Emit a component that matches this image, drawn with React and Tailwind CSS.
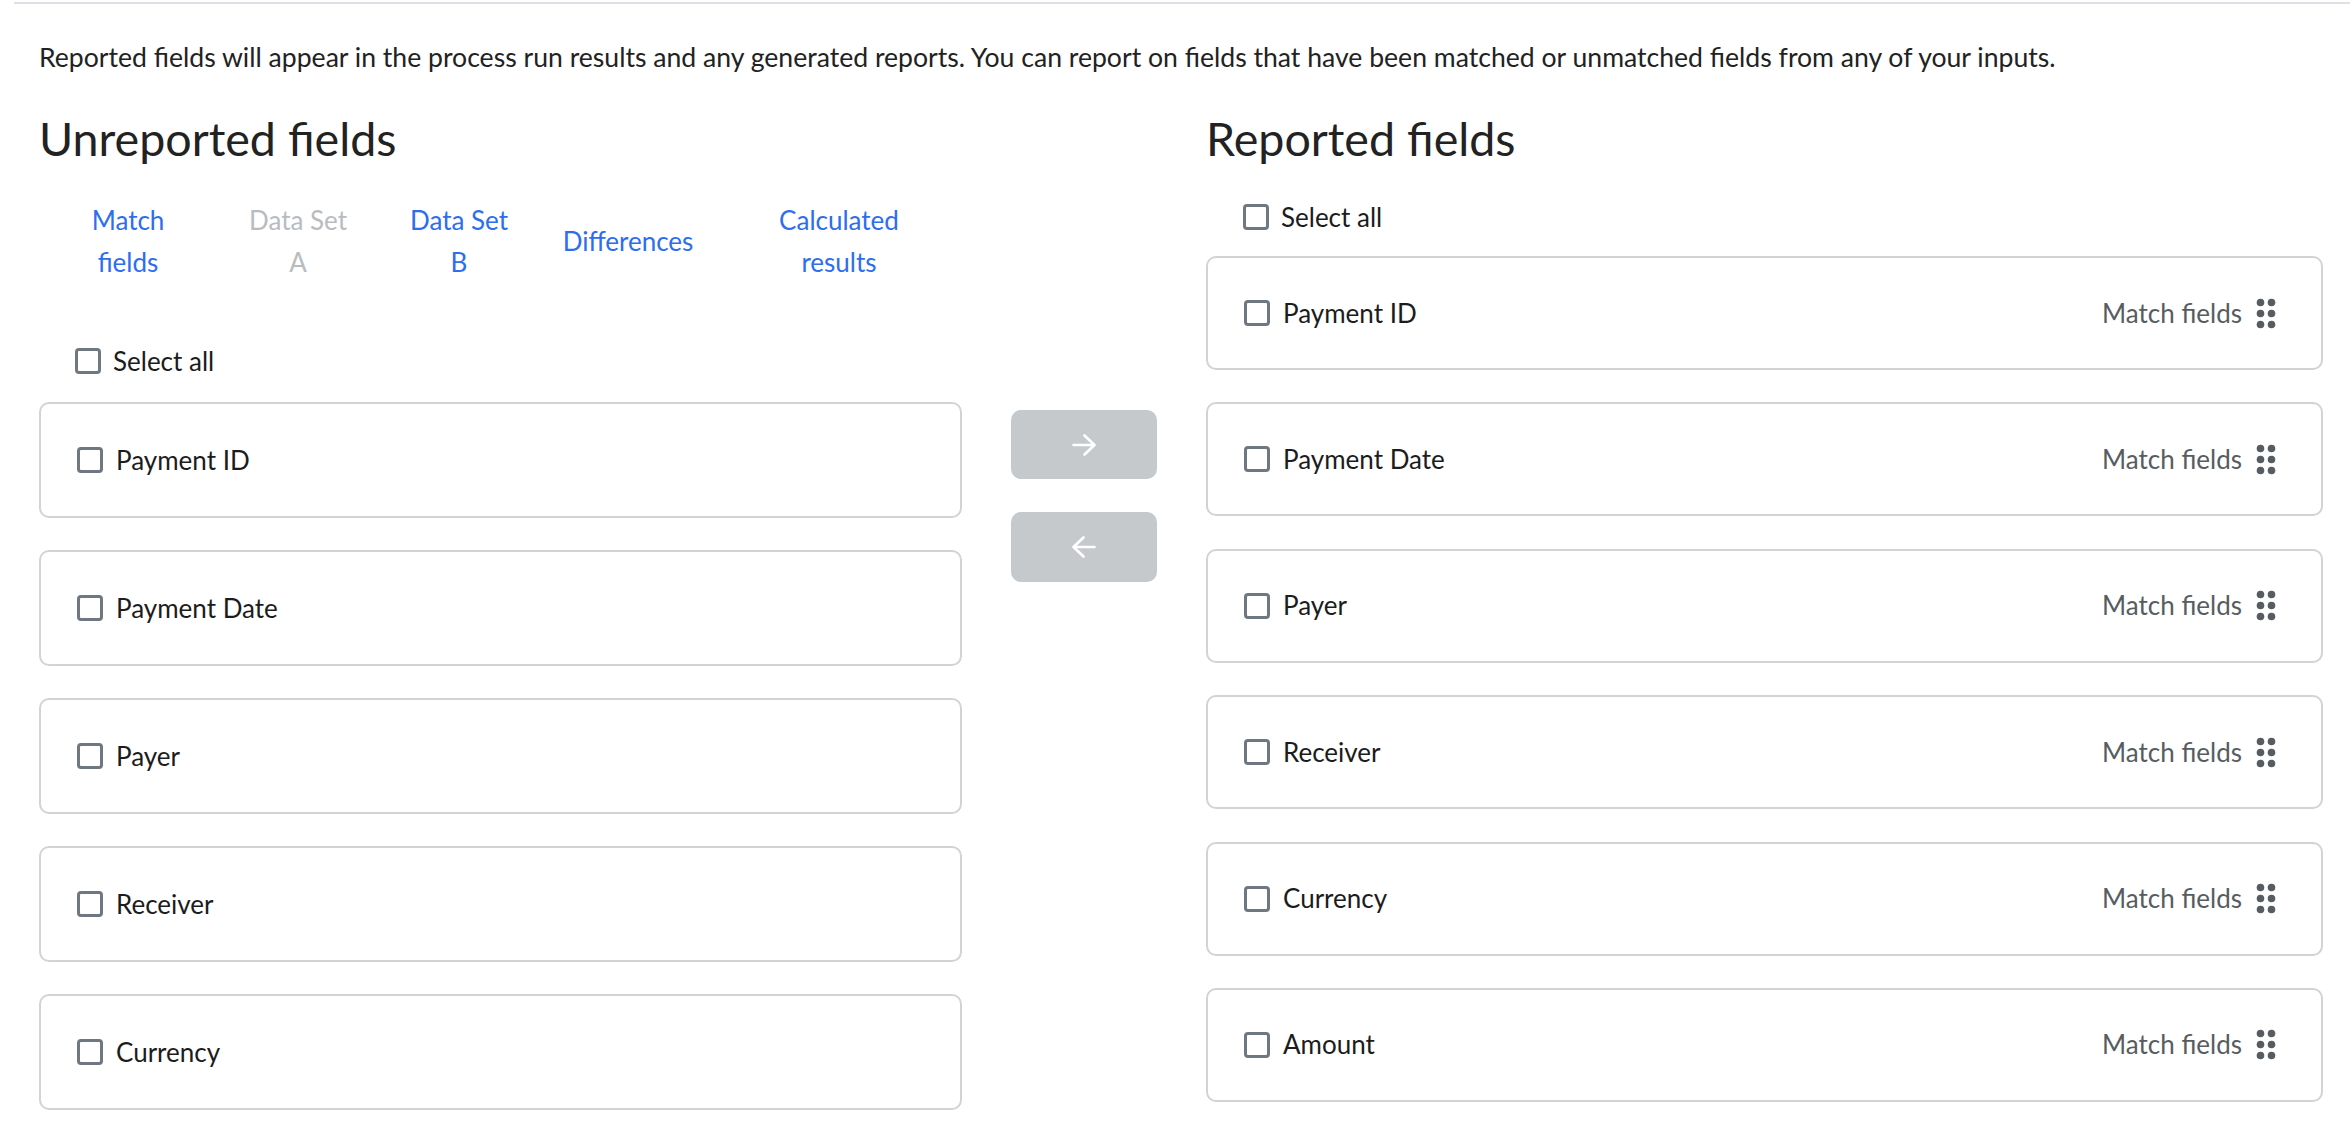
import React from 'react';

const font = { fontFamily: 'Lato, "Open Sans", sans-serif' };

const unreported = ['Payment ID', 'Payment Date', 'Payer', 'Receiver', 'Currency'];
const reported = ['Payment ID', 'Payment Date', 'Payer', 'Receiver', 'Currency', 'Amount'];

const tabs = [
  { lines: ['Match', 'fields'], ml: 'ml-[19px]', active: true },
  { lines: ['Data Set', 'A'], ml: 'ml-[30px]', active: false },
  { lines: ['Data Set', 'B'], ml: 'ml-[21px]', active: true },
  { lines: ['Differences'], ml: 'ml-[29px]', active: true },
  { lines: ['Calculated', 'results'], ml: 'ml-[71px]', active: true },
];

function Checkbox() {
  return <span className="block h-[26px] w-[26px] shrink-0 rounded-[4px] border-[3px] border-[#6f7780] bg-white" />;
}

function DragDots() {
  return (
    <svg width="20" height="31" viewBox="0 0 20 31" className="shrink-0">
      {[4.5, 15.5].map((cx) =>
        [4.5, 15.5, 26.5].map((cy) => <circle key={`${cx}-${cy}`} cx={cx} cy={cy} r="3.8" fill="#575c61" />)
      )}
    </svg>
  );
}

function Arrow({ dir }) {
  return (
    <svg width="24" height="22" viewBox="0 0 24 22" fill="none" stroke="white" strokeWidth="2.6" strokeLinecap="round" strokeLinejoin="round">
      {dir === 'right' ? <path d="M1.5 11H22.5M12.5 1.5L22.5 11L12.5 20.5" /> : <path d="M22.5 11H1.5M11.5 1.5L1.5 11L11.5 20.5" />}
    </svg>
  );
}

export default function App() {
  return (
    <div className="min-h-screen w-full bg-white text-[#1c1c1c]" style={font}>
      <div className="ml-[14px] mt-[2px] h-[2px] bg-[#dde1e6]" />

      <p className="ml-[39px] mt-[35px] text-[26.6px] leading-[36px] text-[#222]">
        Reported fields will appear in the process run results and any generated reports. You can report on fields that have been matched or unmatched fields from any of your inputs.
      </p>

      <div className="flex items-start">
        {/* Unreported */}
        <div className="ml-[39px] w-[923px] shrink-0">
          <h2 className="mt-[33px] text-[46.6px] leading-[60px] text-[#222]">Unreported fields</h2>
          <div className="mt-[31px] flex items-center">
            {tabs.map((t, i) => (
              <div
                key={i}
                className={`${t.ml} w-[140px] shrink-0 text-center text-[26px] leading-[42px] ${t.active ? 'text-[#2d6df0]' : 'text-[#b9bcbf]'}`}
              >
                {t.lines.map((l) => (
                  <div key={l}>{l}</div>
                ))}
              </div>
            ))}
          </div>
          <label className="mt-[60px] flex h-[36px] items-center gap-[12px] pl-[36px] text-[26px]">
            <Checkbox />
            Select all
          </label>
          <div className="mt-[23px] flex flex-col gap-[32px]">
            {unreported.map((f) => (
              <div key={f} className="flex h-[116px] items-center gap-[13px] rounded-[10px] border-2 border-[#d3d3d3] pl-[36px] text-[26px]">
                <Checkbox />
                {f}
              </div>
            ))}
          </div>
        </div>

        {/* Move buttons */}
        <div className="mx-[49px] mt-[335px] flex w-[146px] shrink-0 flex-col gap-[33px]">
          <button className="flex h-[69px] items-center justify-center rounded-[10px] bg-[#c6c9cc]">
            <Arrow dir="right" />
          </button>
          <button className="flex h-[70px] items-center justify-center rounded-[10px] bg-[#c6c9cc]">
            <Arrow dir="left" />
          </button>
        </div>

        {/* Reported */}
        <div className="w-[1117px] shrink-0">
          <h2 className="mt-[33px] text-[46.6px] leading-[60px] text-[#222]">Reported fields</h2>
          <label className="mt-[31px] flex h-[36px] items-center gap-[12px] pl-[37px] text-[26px]">
            <Checkbox />
            Select all
          </label>
          <div className="mt-[21px] flex flex-col gap-[32.4px]">
            {reported.map((f) => (
              <div key={f} className="flex h-[114px] items-center rounded-[10px] border-2 border-[#d3d3d3] pl-[36px] pr-[45px] text-[26px]">
                <Checkbox />
                <span className="ml-[13px] flex-1">{f}</span>
                <span className="mr-[14px] text-[#575c61]">Match fields</span>
                <DragDots />
              </div>
            ))}
          </div>
        </div>
      </div>
    </div>
  );
}
